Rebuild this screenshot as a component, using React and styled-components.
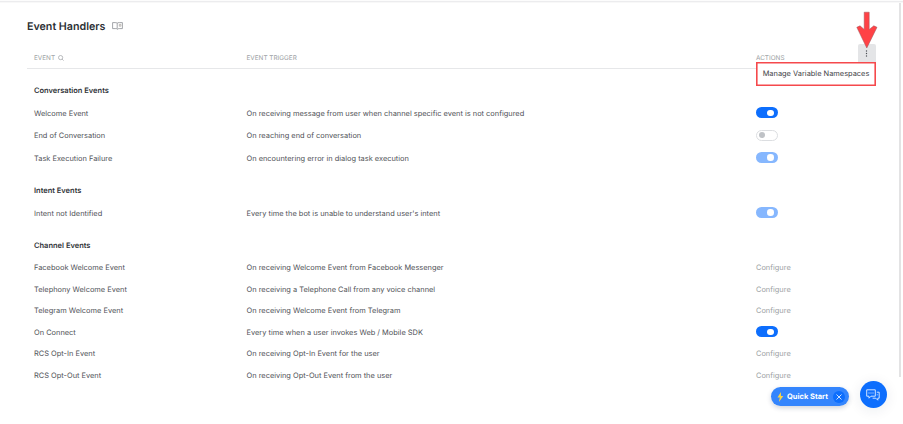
import React from "react";
import styled, { createGlobalStyle } from "styled-components";

const GlobalStyle = createGlobalStyle`
  * { box-sizing: border-box; }
  body { margin: 0; background: #fff; font-family: Inter, sans-serif; overflow: hidden; }
`;

const Page = styled.main`
  position: relative;
  display: flex;
  width: 903px;
  height: 424px;
  padding-right: 2px;
  border-top: 1px solid #fcfcfc;
  background: linear-gradient(#ececee 1px, #f8f8f8 1px, #f8f8f8 2px, #fff 2px);
  color: #4f5257;
  font-size: 7.43px;
  overflow: hidden;
  text-rendering: geometricPrecision;
`;

const Content = styled.div`
  flex: 1;
  padding: 2px 23px 0 27px;
`;

const Scrollbar = styled.div`
  width: 2px;
  height: 374px;
  margin-top: 2px;
  background: #e3e3e4;
`;

const TitleBar = styled.header`
  display: flex;
  align-items: center;
  gap: 7px;
  height: 46px;
`;

const Title = styled.h1`
  margin: 0;
  padding-top: 1px;
  color: #2c2f34;
  font-size: 10.7px;
  font-weight: 600;
  line-height: 16px;
`;

const columns = `
  display: grid;
  grid-template-columns: 212.5px 509.5px 1fr;
  align-items: center;
  padding-left: 7px;
`;

const TableHead = styled.div`
  ${columns}
  height: 20px;
  border-bottom: 1px solid #e6e7e9;
  color: #9c9fa4;
  font-size: 6.4px;
`;

const HeadCell = styled.div`
  display: flex;
  align-items: center;
  gap: 3px;
  height: 18px;
  padding-bottom: 2px;
`;

const ActionsCell = styled(HeadCell)`
  position: relative;
  justify-content: space-between;
`;

const KebabButton = styled.button`
  display: grid;
  place-items: center;
  align-self: flex-start;
  width: 18px;
  height: 18px;
  margin-top: -5.5px;
  padding: 0 1px 0 0;
  border: 0;
  border-radius: 2px 2px 0 0;
  background: #e4e5e7;
`;

const Menu = styled.div`
  position: absolute;
  top: 12px;
  right: 0;
  display: grid;
  place-items: center;
  width: 120px;
  height: 24px;
  border: 1px solid #f5494c;
  box-shadow: inset 0 0 0 0.6px #f5494c;
  background: #fff;
  color: #3e4146;
  font-size: 7.43px;
  line-height: 10px;
  white-space: nowrap;
`;

const Arrow = styled.svg`
  position: absolute;
  bottom: 19px;
  right: -3px;
`;

const Group = styled.section`
  padding-top: 10.4px;
`;

const GroupTitle = styled.h2`
  display: flex;
  align-items: center;
  height: 22.4px;
  margin: 0;
  padding-left: 7px;
  color: #303338;
  font-size: 7.5px;
  font-weight: 600;
`;

const Row = styled.div`
  ${columns}
  height: ${(p) => p.$height}px;
  white-space: nowrap;
`;

const Cell = styled.span`
  padding-top: 1px;
`;

const Configure = styled(Cell)`
  color: #9c9fa4;
`;

const Toggle = styled.div`
  display: flex;
  align-items: center;
  justify-content: ${(p) => (p.$state === "off" ? "flex-start" : "flex-end")};
  width: 21.5px;
  height: 11px;
  padding: 0 ${(p) => (p.$state === "off" ? 1.5 : 4)}px;
  border: ${(p) => (p.$state === "off" ? "1px solid #dcdee1" : "0")};
  border-radius: 6px;
  background: ${(p) => ({ on: "#0d6efd", off: "#fff", locked: "#86b7fe" })[p.$state]};
`;

const Knob = styled.span`
  width: 6.5px;
  height: 6.5px;
  border-radius: 50%;
  background: ${(p) => (p.$state === "off" ? "#bfc2c6" : "#fff")};
`;

const FloatingDock = styled.aside`
  position: absolute;
  right: 16.5px;
  bottom: 16px;
  display: flex;
  align-items: center;
  gap: 11px;
`;

const QuickStart = styled.div`
  display: flex;
  align-items: center;
  gap: 3px;
  width: 78px;
  height: 19.5px;
  margin-top: 4px;
  padding: 0 4px 0 6px;
  border-radius: 10px;
  background: #3485fd;
  box-shadow: 0 2px 5px rgba(20, 40, 80, 0.2);
  color: #fff;
  font-size: 7.5px;
  font-weight: 700;
  white-space: nowrap;
`;

const CloseButton = styled.button`
  display: grid;
  place-items: center;
  width: 12px;
  height: 12px;
  margin-left: auto;
  padding: 0;
  border: 0;
  border-radius: 50%;
  background: #0d6efd;
`;

const ChatButton = styled.button`
  display: grid;
  place-items: center;
  width: 26.5px;
  height: 27px;
  padding: 0;
  border: 0;
  border-radius: 50%;
  background: #0d6efd;
  box-shadow: 0 2px 14px rgba(20, 40, 80, 0.09);
`;

const groups = [
  {
    title: "Conversation Events",
    height: 22.3,
    rows: [
      ["Welcome Event", "On receiving message from user when channel specific event is not configured", "on"],
      ["End of Conversation", "On reaching end of conversation", "off"],
      ["Task Execution Failure", "On encountering error in dialog task execution", "locked"],
    ],
  },
  {
    title: "Intent Events",
    height: 22.3,
    rows: [["Intent not Identified", "Every time the bot is unable to understand user's intent", "locked"]],
  },
  {
    title: "Channel Events",
    height: 21.5,
    rows: [
      ["Facebook Welcome Event", "On receiving Welcome Event from Facebook Messenger"],
      ["Telephony Welcome Event", "On receiving a Telephone Call from any voice channel"],
      ["Telegram Welcome Event", "On receiving Welcome Event from Telegram"],
      ["On Connect", "Every time when a user invokes Web / Mobile SDK", "on"],
      ["RCS Opt-In Event", "On receiving Opt-In Event for the user"],
      ["RCS Opt-Out Event", "On receiving Opt-Out Event from the user"],
    ],
  },
];

function EventRow({ row: [name, trigger, state], height }) {
  return (
    <Row $height={height}>
      <Cell>{name}</Cell>
      <Cell>{trigger}</Cell>
      {state ? (
        <Toggle $state={state}><Knob $state={state} /></Toggle>
      ) : (
        <Configure>Configure</Configure>
      )}
    </Row>
  );
}

export default function App() {
  return (
    <>
      <GlobalStyle />
      <Page>
        <Content>
          <TitleBar>
            <Title>Event Handlers</Title>
            <svg width="11" height="8" viewBox="0 0 11 8" fill="none" stroke="#85888d" strokeWidth=".75">
              <path d="M5.2 1.2C4.8.7 4 .6 3.2.6H.6v6h3.2c.8 0 1.3.2 1.7.7.4-.5.9-.7 1.7-.7h3.2v-6H7.4c-1 0-1.8 0-2.2.6v5.6" />
              <path d="M7.3 2.4h1.6v1.8H7.3z" stroke="#aaa5a2" />
            </svg>
          </TitleBar>
          <TableHead>
            <HeadCell>
              EVENT
              <svg width="6" height="6" viewBox="0 0 6 6" fill="none" stroke="#9c9fa4" strokeWidth=".7">
                <circle cx="2.6" cy="2.6" r="2.1" />
                <path d="m4.1 4.1 1.5 1.5" />
              </svg>
            </HeadCell>
            <HeadCell>EVENT TRIGGER</HeadCell>
            <ActionsCell>
              ACTIONS
              <KebabButton aria-label="More actions">
                <svg width="3" height="7" viewBox="0 0 3 7" fill="#4b4e53">
                  <circle cx="1.5" cy="1" r=".7" />
                  <circle cx="1.5" cy="3.5" r=".7" />
                  <circle cx="1.5" cy="6" r=".7" />
                </svg>
              </KebabButton>
              <Menu>Manage Variable Namespaces</Menu>
              <Arrow width="24" height="38" viewBox="0 0 24 38">
                <path d="M9.2 1.2h5v17.2l4.6-3.6 3.2 1.5L11.8 37 1.8 16.3 5 14.8l4.2 3.6z" fill="#ff4246" stroke="#9b555a" strokeWidth=".5" />
              </Arrow>
            </ActionsCell>
          </TableHead>
          {groups.map((group) => (
            <Group key={group.title}>
              <GroupTitle>{group.title}</GroupTitle>
              {group.rows.map((row) => (
                <EventRow key={row[0]} row={row} height={group.height} />
              ))}
            </Group>
          ))}
        </Content>
        <Scrollbar />
        <FloatingDock>
          <QuickStart>
            <svg width="7" height="10" viewBox="0 0 7 10" fill="#f8d348">
              <path d="M3.9 0 .5 5.4h2.3L1.9 10l4.4-6H4z" />
            </svg>
            Quick Start
            <CloseButton aria-label="Close">
              <svg width="6" height="6" viewBox="0 0 6 6" stroke="#fff" strokeWidth=".8">
                <path d="m.5.5 5 5m0-5-5 5" />
              </svg>
            </CloseButton>
          </QuickStart>
          <ChatButton aria-label="Chat">
            <svg width="14" height="12" viewBox="0 0 14 12" fill="none" stroke="#e4efff" strokeWidth=".9">
              <path d="M.7.8h8.6v6.4H5L3 9.2v-2H.7z" />
              <path d="M10.8 3.2h2.4v6h-1.4v2l-2-2H6.6" />
              <path d="M2.5 4h1M4.5 4h1M6.5 4h1M10.8 5.8h.8" strokeWidth="1" />
            </svg>
          </ChatButton>
        </FloatingDock>
      </Page>
    </>
  );
}
